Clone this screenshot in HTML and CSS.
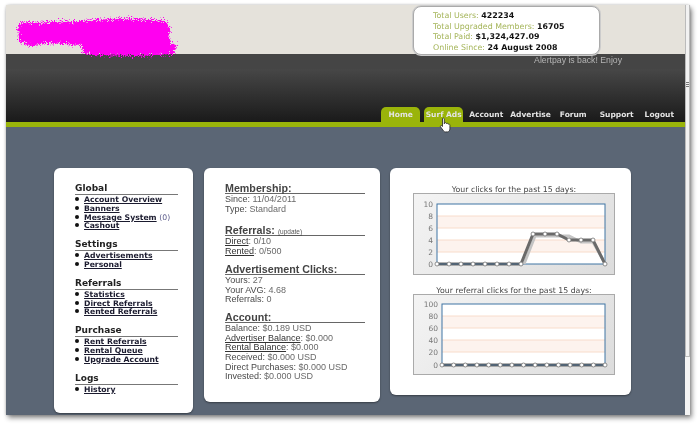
FILE: index.html
```html
<!DOCTYPE html>
<html lang="en">
<head>
<meta charset="utf-8">
<title>Member area</title>
<link rel="stylesheet" href="styles.css">
</head>
<body>
<div class="window">
  <div class="page">
    <header class="top">
      <svg class="scribble" width="180" height="56" viewBox="0 0 180 56">
        <defs>
          <filter id="grain" x="-10%" y="-20%" width="120%" height="140%">
            <feTurbulence type="fractalNoise" baseFrequency="1.100" numOctaves="3" seed="4"/>
            <feDisplacementMap in="SourceGraphic" scale="11" xChannelSelector="R" yChannelSelector="G"/>
          </filter>
        </defs>
        <path class="scribble-fill" filter="url(#grain)" d="M12 18 C20 16 30 19 45 17 L75 16 L116 13 L160 16 L164 24 L163 36 L171 41 L168 49 L130 51 L85 50 L77 48 L76 40 L40 38 L24 41 L13 37 Z"/>
      </svg>
      <div class="stats">
        <div>Total Users: <b>422234</b></div>
        <div>Total Upgraded Members: <b>16705</b></div>
        <div>Total Paid: <b>$1,324,427.09</b></div>
        <div>Online Since: <b>24 August 2008</b></div>
      </div>
    </header>
    <div class="notice"><span>Alertpay is back! Enjoy</span></div>
    <nav class="nav">
      <a class="tab">Home</a>
      <a class="tab tab-hover">Surf Ads
        <svg class="hand" width="14" height="17" viewBox="0 0 14 17">
          <path d="M3.500 1.500c.8-.8 1.800-.3 1.800.7v4.600l.3-1c1-.5 1.700 0 1.800.7.9-.5 1.600 0 1.800.7 1-.4 1.700.2 1.700 1.100v3.600c0 1.500-1 3-2.500 3H6.400c-1 0-1.600-.7-2.200-1.500L1.500 9.800c-.5-.9.500-1.700 1.400-1L3.500 9.500z"/>
        </svg>
      </a>
      <a class="link link-account">Account</a>
      <a class="link link-advertise">Advertise</a>
      <a class="link link-forum">Forum</a>
      <a class="link link-support">Support</a>
      <a class="link link-logout">Logout</a>
    </nav>
    <main class="main">
      <section class="card card-menu">
        <h3>Global</h3>
        <ul>
          <li><a>Account Overview</a></li>
          <li><a>Banners</a></li>
          <li><a>Message System</a> <span class="count">(0)</span></li>
          <li><a>Cashout</a></li>
        </ul>
        <h3>Settings</h3>
        <ul>
          <li><a>Advertisements</a></li>
          <li><a>Personal</a></li>
        </ul>
        <h3>Referrals</h3>
        <ul>
          <li><a>Statistics</a></li>
          <li><a>Direct Referrals</a></li>
          <li><a>Rented Referrals</a></li>
        </ul>
        <h3>Purchase</h3>
        <ul>
          <li><a>Rent Referrals</a></li>
          <li><a>Rental Queue</a></li>
          <li><a>Upgrade Account</a></li>
        </ul>
        <h3>Logs</h3>
        <ul>
          <li><a>History</a></li>
        </ul>
      </section>
      <section class="card card-info">
        <h2>Membership:</h2>
        <p><span>Since:</span> 11/04/2011</p>
        <p><span>Type:</span> Standard</p>
        <h2 class="wide-gap">Referrals: <a class="update">(update)</a></h2>
        <p><a>Direct</a>: 0/10</p>
        <p><a>Rented</a>: 0/500</p>
        <h2>Advertisement Clicks:</h2>
        <p><span>Yours:</span> 27</p>
        <p><span>Your AVG:</span> 4.68</p>
        <p><span>Referrals:</span> 0</p>
        <h2>Account:</h2>
        <p><span>Balance:</span> $0.189 USD</p>
        <p><a>Advertiser Balance</a>: $0.000</p>
        <p><a>Rental Balance</a>: $0.000</p>
        <p><span>Received:</span> $0.000 USD</p>
        <p><span>Direct Purchases:</span> $0.000 USD</p>
        <p><span>Invested:</span> $0.000 USD</p>
      </section>
      <section class="card card-charts">
        <div class="chart-title">Your clicks for the past 15 days:</div>
        <svg class="chart" width="202" height="82" viewBox="0 0 202 82">
          <rect class="plot" x="24" y="11" width="168" height="60"/>
          <g class="bands"><rect x="24" y="23" width="168" height="12"/><rect x="24" y="47" width="168" height="12"/></g>
          <g class="grid"><path d="M24 23H192M24 35H192M24 47H192M24 59H192"/></g>
          <rect class="frame" x="24" y="11" width="168" height="60"/>
          <g class="ticks">
            <text x="20" y="14">10</text><text x="20" y="26">8</text><text x="20" y="38">6</text><text x="20" y="50">4</text><text x="20" y="62">2</text><text x="20" y="74">0</text>
          </g>
          <polyline class="line-shadow" points="111,71 122,43 156,43 168,49 180,49 193,72"/>
          <polyline class="line" points="24,71 108,71 120,41 132,41 144,41 156,47 168,47 180,47 192,71"/>
          <path class="baseline" d="M24 71H108"/>
          <g class="dots">
            <circle cx="24" cy="71" r="2"/><circle cx="36" cy="71" r="2"/><circle cx="48" cy="71" r="2"/><circle cx="60" cy="71" r="2"/><circle cx="72" cy="71" r="2"/><circle cx="84" cy="71" r="2"/><circle cx="96" cy="71" r="2"/><circle cx="108" cy="71" r="2"/><circle cx="120" cy="41" r="2"/><circle cx="132" cy="41" r="2"/><circle cx="144" cy="41" r="2"/><circle cx="156" cy="47" r="2"/><circle cx="168" cy="47" r="2"/><circle cx="180" cy="47" r="2"/><circle cx="192" cy="71" r="2"/>
          </g>
        </svg>
        <div class="chart-title chart-title-second">Your referral clicks for the past 15 days:</div>
        <svg class="chart" width="202" height="81" viewBox="0 0 202 81">
          <rect class="plot" x="29" y="10" width="163" height="61"/>
          <g class="bands"><rect x="29" y="22" width="163" height="12"/><rect x="29" y="46" width="163" height="12"/></g>
          <g class="grid"><path d="M29 22H192M29 34H192M29 46H192M29 58H192"/></g>
          <rect class="frame" x="29" y="10" width="163" height="61"/>
          <g class="ticks">
            <text x="25" y="13">100</text><text x="25" y="25">80</text><text x="25" y="37">60</text><text x="25" y="49">40</text><text x="25" y="61">20</text><text x="25" y="74">0</text>
          </g>
          <polyline class="line" points="29,71 192,71"/>
          <path class="baseline" d="M29 71H192"/>
          <g class="dots">
            <circle cx="29" cy="71" r="2"/><circle cx="40.600" cy="71" r="2"/><circle cx="52.300" cy="71" r="2"/><circle cx="63.900" cy="71" r="2"/><circle cx="75.600" cy="71" r="2"/><circle cx="87.200" cy="71" r="2"/><circle cx="98.900" cy="71" r="2"/><circle cx="110.500" cy="71" r="2"/><circle cx="122.100" cy="71" r="2"/><circle cx="133.800" cy="71" r="2"/><circle cx="145.400" cy="71" r="2"/><circle cx="157.100" cy="71" r="2"/><circle cx="168.700" cy="71" r="2"/><circle cx="180.400" cy="71" r="2"/><circle cx="192" cy="71" r="2"/>
          </g>
        </svg>
      </section>
    </main>
  </div>
  <div class="scrollbar">
    <div class="scroll-thumb"><span class="grip"></span></div>
  </div>
</div>
</body>
</html>
```

FILE: styles.css
```css
* { box-sizing: border-box; }
html, body { margin: 0; height: 100%; overflow: hidden; background: #fff; }
body { padding: 5px 0 0 6px; font-family: "DejaVu Sans", sans-serif; }

.window {
  display: flex;
  width: 684px;
  height: 410px;
  box-shadow: 0 0 3px rgba(0,0,0,.25), 2px 3px 5px rgba(0,0,0,.45);
  border-radius: 3px 3px 0 0;
  filter: blur(.3px);
}
.page { width: 679px; display: flex; flex-direction: column; overflow: hidden; }

.top {
  position: relative;
  height: 49px;
  flex: none;
  display: flex;
  justify-content: flex-end;
  align-items: flex-start;
  padding: 1px 85px 0 0;
  background: #e5e2db;
}
.scribble { position: absolute; left: 0; top: 0; }
.scribble-fill { fill: #ff00f0; }
.stats {
  position: relative;
  z-index: 2;
  width: 187px;
  height: 49px;
  padding: 4px 0 0 19px;
  border: 1px solid #aaa;
  box-shadow: 0 0 0 1px #ccc;
  border-radius: 8px;
  background: #fff;
  font-size: 7.900px;
  line-height: 10.700px;
  color: #a5b55a;
  white-space: nowrap;
}
.stats b { color: #111; }

.notice {
  height: 15px;
  flex: none;
  display: flex;
  justify-content: flex-end;
  padding-right: 63px;
  background: #454545;
  color: #b5b5b5;
  font-family: "Liberation Sans", sans-serif;
  font-size: 8.700px;
  line-height: 12px;
}
.nav {
  height: 58px;
  flex: none;
  display: flex;
  align-items: flex-end;
  justify-content: flex-end;
  padding-right: 11px;
  border-bottom: 5px solid #9ab40a;
  background: linear-gradient(#474747, #1a1a1a);
  font-size: 7.500px;
  font-weight: 700;
  color: #e4e4e4;
  white-space: nowrap;
}
.tab {
  position: relative;
  width: 39px;
  height: 15px;
  margin-right: 4px;
  text-align: center;
  line-height: 15px;
  background: #9ab40a;
  border-radius: 5px 5px 0 0;
}
.tab-hover { margin-right: 6px; }
.hand { position: absolute; left: 15px; top: 10px; z-index: 3; }
.hand path { fill: #fff; stroke: #222; stroke-width: .8; }
.link { line-height: 15px; }
.link-account { margin-right: 7px; }
.link-advertise { margin-right: 9px; }
.link-forum { margin-right: 13px; }
.link-support { margin-right: 11px; }

.main {
  flex: 1;
  display: flex;
  align-items: flex-start;
  padding: 41px 0 0 48px;
  background: #5b6675;
}
.card { background: #fff; border-radius: 6px; box-shadow: 0 1px 2px rgba(0,0,0,.4); }

.card-menu { width: 139px; height: 245px; margin-right: 11px; padding: 15px 15px 0 21px; }
.card-menu h3 {
  margin: 0;
  height: 12px;
  border-bottom: 1px solid #777;
  font-size: 9px;
  font-weight: 700;
  line-height: 11px;
  color: #222;
}
.card-menu ul { margin: 1px 0 8px; padding: 0; list-style: none; }
.card-menu li {
  position: relative;
  padding-left: 9px;
  font-size: 7.700px;
  font-weight: 700;
  line-height: 8.800px;
  white-space: nowrap;
}
.card-menu li::before {
  content: "";
  position: absolute;
  left: 0;
  top: 1px;
  width: 4px;
  height: 4px;
  border-radius: 50%;
  background: #111;
}
.card-menu a { color: #1a1a2e; text-decoration: underline; }
.count { font-weight: 400; color: #5a5a8a; }

.card-info { width: 176px; height: 234px; margin-right: 10px; padding: 14px 15px 0 21px; font-family: "Liberation Sans", sans-serif; }
.card-info h2 {
  margin: 6px 0 1px;
  height: 12px;
  border-bottom: 1px solid #666;
  font-size: 10.700px;
  font-weight: 700;
  line-height: 12px;
  color: #444;
  white-space: nowrap;
}
.card-info h2:first-child { margin-top: 0; }
.card-info h2.wide-gap { margin-top: 10px; }
.card-info p { margin: 0; font-size: 9px; line-height: 9.700px; color: #6a6a6a; white-space: nowrap; }
.card-info p span { color: #4a4a4a; }
.card-info a { color: #333; text-decoration: underline; }
.card-info .update { font-size: 6.500px; font-weight: 400; color: #555; }

.card-charts { width: 241px; height: 227px; padding: 17px 0 0 23px; }
.chart-title { width: 202px; height: 8px; font-size: 7.800px; line-height: 10px; text-align: center; color: #444; white-space: nowrap; }
.chart-title-second { margin-top: 11px; }
.chart {
  display: block;
  background: linear-gradient(135deg, #f4f4f4, #dcdcdc);
  box-shadow: inset 0 0 0 1px #aaa;
}
.bands rect { fill: #fdf3ee; }
.plot { fill: #fff; }
.grid path { fill: none; stroke: #f8dccb; stroke-width: 1; }
.frame { fill: none; stroke: #3f74a3; stroke-width: 1; }
.ticks text { font-family: "DejaVu Sans", sans-serif; font-size: 7.500px; text-anchor: end; fill: #777; }
.line-shadow { fill: none; stroke: #c4c4c4; stroke-width: 3; }
.line { fill: none; stroke: #6a6a6a; stroke-width: 3; }
.baseline { fill: none; stroke: #3a5f80; stroke-width: 1; }
.dots circle { fill: #fff; stroke: #777; stroke-width: .8; }

.scrollbar { width: 5px; background: #f4f4f4; }
.scroll-thumb {
  height: 352px;
  padding-top: 77px;
  border-left: 1px solid #bbb;
  border-right: 1px solid #bbb;
  border-bottom: 1px solid #bbb;
  background: #f2f2f2;
}
.grip { display: block; width: 3px; height: 6px; background: repeating-linear-gradient(#777 0 1px, transparent 1px 2px); }
```
